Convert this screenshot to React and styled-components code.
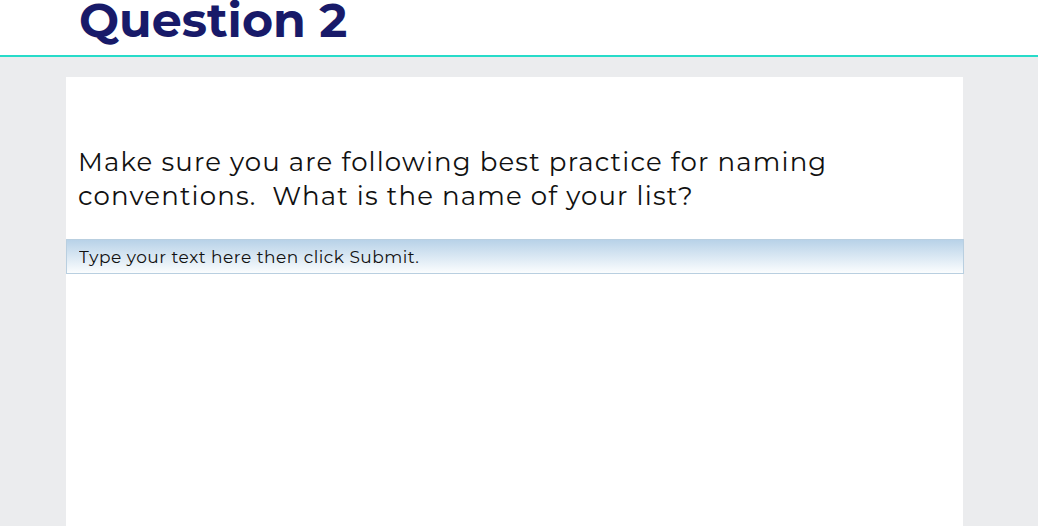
import React from 'react';
import styled, { createGlobalStyle } from 'styled-components';

const GlobalStyle = createGlobalStyle`
  html, body {
    margin: 0;
    padding: 0;
    background: #ebecee;
    font-family: "Montserrat", "Open Sans", "Liberation Sans", sans-serif;
  }
`;

const Page = styled.div`
  width: 1038px;
  height: 526px;
  overflow: hidden;
  background: #ebecee;
`;

const Header = styled.header`
  height: 55px;
  background: #ffffff;
  border-bottom: 2px solid #27dbc9;
  padding-left: 79px;
  display: flex;
  align-items: flex-end;
`;

const Title = styled.h1`
  margin: 0;
  font-weight: 700;
  font-size: 47.5px;
  line-height: 1;
  color: #181a69;
  transform: translateY(-11px);
`;

const Body = styled.main`
  padding: 20px 75px 0 66px;
`;

const Panel = styled.section`
  width: 897px;
  height: 460px;
  background: #ffffff;
  padding-top: 68px;
  box-sizing: border-box;
`;

const Prompt = styled.p`
  margin: 0 0 26px;
  padding: 0 12px;
  font-size: 26px;
  line-height: 34px;
  letter-spacing: 1.15px;
  color: #111111;
  width: 790px;
`;

const Answer = styled.input`
  display: block;
  box-sizing: border-box;
  width: 898px;
  height: 35px;
  margin: 0;
  padding: 0 12px;
  border: 1px solid #b9cfe0;
  background: linear-gradient(#b8d2e8, #fbfdfe);
  font-family: "Montserrat", sans-serif;
  font-size: 17px;
  letter-spacing: 0.5px;
  color: #111111;
  outline: none;

  &::placeholder {
    color: #111111;
    opacity: 1;
  }
`;

export default function App() {
  return (
    <Page>
      <GlobalStyle />
      <Header>
        <Title>Question 2</Title>
      </Header>
      <Body>
        <Panel>
          <Prompt>
            Make sure you are following best practice for naming conventions.&nbsp; What is the name of your list?
          </Prompt>
          <Answer placeholder="Type your text here then click Submit." />
        </Panel>
      </Body>
    </Page>
  );
}
